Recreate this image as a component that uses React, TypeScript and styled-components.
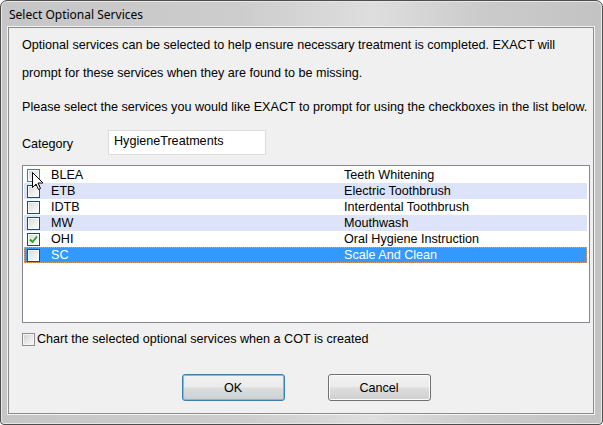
import styled, { createGlobalStyle } from 'styled-components'

const GlobalStyle = createGlobalStyle`
	html, body {
		margin: 0;
		padding: 0;
		background: #ffffff;
	}
	* {
		box-sizing: border-box;
	}
`

const Window = styled.div`
	position: relative;
	display: flex;
	flex-direction: column;
	width: 603px;
	height: 425px;
	padding: 0 8px 10px 7px;
	border: 1px solid #4d4d4d;
	border-radius: 7px 7px 4px 4px;
	background: linear-gradient(90deg, #c6c6c6 0%, #cdcdcd 40%, #dedede 62%, #cbcbcb 80%, #c3c3c3 100%);
	box-shadow: inset 0 0 0 1px #e8e8e8;
	font-family: 'Liberation Sans', Arial, sans-serif;
	font-size: 12.6px;
	color: #000;
`

const TitleBar = styled.div`
	display: flex;
	align-items: center;
	height: 26px;
	padding-left: 1px;
	font-family: 'Noto Sans', 'Liberation Sans', sans-serif;
	font-size: 12px;
	color: #000;
`

const Client = styled.div`
	flex: 1;
	display: flex;
	flex-direction: column;
	padding: 3px 3px 0 13px;
	border: 1px solid #8c8c8c;
	background: #f0f0f0;
	box-shadow: 0 0 0 1px #f4f4f4;
`

const Para = styled.p<{ $gap?: number }>`
	margin: 0 0 ${p => p.$gap ?? 0}px;
	line-height: 28px;
	white-space: nowrap;
`

const CategoryRow = styled.div`
	display: flex;
	align-items: center;
	margin-top: 9px;
	height: 25px;
`

const Label = styled.span`
	width: 86px;
	padding-top: 2px;
`

const TextBox = styled.div`
	width: 158px;
	height: 25px;
	padding: 3px 0 0 5px;
	border: 1px solid #dcdcdc;
	background: #fff;
`

const ListBox = styled.div`
	position: relative;
	margin-top: 10px;
	height: 158px;
	padding: 1px;
	border: 1px solid #828790;
	background: #fff;
`

const Row = styled.div<{ $alt?: boolean; $selected?: boolean }>`
	display: grid;
	grid-template-columns: 27px 293px 1fr;
	align-items: center;
	height: 16px;
	margin-right: 1px;
	background: ${p => (p.$selected ? '#3399ff' : p.$alt ? '#dde4f9' : '#fff')};
	color: ${p => (p.$selected ? '#fff' : '#000')};
	outline: ${p => (p.$selected ? '1px dotted #d8a070' : 'none')};
	outline-offset: -1px;
	line-height: 16px;
`

const Check = styled.span<{ $hover?: boolean }>`
	position: relative;
	display: block;
	width: 13px;
	height: 13px;
	margin-left: 3px;
	border: 1px solid ${p => (p.$hover ? '#3c7fb1' : '#1f4a6e')};
	background: linear-gradient(135deg, #d8d8d8 0%, #f4f4f4 70%, #ffffff 100%);
	box-shadow: inset 0 0 0 1px #fff;
`

const CheckMark = styled.svg`
	position: absolute;
	left: 1px;
	top: 1px;
`

const OptionRow = styled.label`
	display: flex;
	align-items: center;
	gap: 2px;
	margin-top: 8px;
	height: 16px;
`

const PlainCheck = styled.span`
	display: block;
	width: 13px;
	height: 13px;
	border: 1px solid #8f8f8f;
	background: linear-gradient(135deg, #cfcfcf 0%, #ececec 60%, #f8f8f8 100%);
	box-shadow: inset 0 0 0 1px #f4f4f4;
`

const Buttons = styled.div`
	display: flex;
	justify-content: center;
	gap: 43px;
	margin-top: 27px;
`

const Button = styled.button<{ $default?: boolean }>`
	width: 103px;
	height: 27px;
	border: 1px solid ${p => (p.$default ? '#3c7fb1' : '#707070')};
	border-radius: 3px;
	background: linear-gradient(180deg, #f2f2f2 0%, #ebebeb 48%, #dddddd 52%, #cfcfcf 100%);
	box-shadow: inset 0 0 0 1px ${p => (p.$default ? '#48d1fc' : '#fcfcfc')};
	font-family: 'Liberation Sans', Arial, sans-serif;
	font-size: 12.6px;
	color: #000;
	padding: 0;
`

const Cursor = styled.svg`
	position: absolute;
	left: 9px;
	top: 6px;
`

const services = [
	{ code: 'BLEA', name: 'Teeth Whitening' },
	{ code: 'ETB', name: 'Electric Toothbrush' },
	{ code: 'IDTB', name: 'Interdental Toothbrush' },
	{ code: 'MW', name: 'Mouthwash' },
	{ code: 'OHI', name: 'Oral Hygiene Instruction', checked: true },
	{ code: 'SC', name: 'Scale And Clean', selected: true },
]

export default () => {
	return (
		<>
			<GlobalStyle />
			<Window>
				<TitleBar>Select Optional Services</TitleBar>
				<Client>
					<Para $gap={6}>
						Optional services can be selected to help ensure necessary treatment is completed. EXACT will
						<br />
						prompt for these services when they are found to be missing.
					</Para>
					<Para>
						Please select the services you would like EXACT to prompt for using the checkboxes in the list below.
					</Para>
					<CategoryRow>
						<Label>Category</Label>
						<TextBox>HygieneTreatments</TextBox>
					</CategoryRow>
					<ListBox>
						{services.map((s, i) => (
							<Row key={s.code} $alt={i % 2 === 1} $selected={s.selected}>
								<Check $hover={i === 0}>
									{s.checked && (
										<CheckMark width='9' height='9' viewBox='0 0 9 9'>
											<path d='M1 4.5 L3.5 7 L8 1.5' fill='none' stroke='#21a121' strokeWidth='1.8' />
										</CheckMark>
									)}
								</Check>
								<span>{s.code}</span>
								<span>{s.name}</span>
							</Row>
						))}
						<Cursor width='12' height='19' viewBox='0 0 12 19'>
							<path
								d='M0.5 0.5 L0.5 15.5 L4 12 L6.5 17.5 L8.5 16.5 L6 11 L11 11 Z'
								fill='#fff'
								stroke='#000'
								strokeWidth='1'
								strokeLinejoin='round'
							/>
						</Cursor>
					</ListBox>
					<OptionRow>
						<PlainCheck />
						<span>Chart the selected optional services when a COT is created</span>
					</OptionRow>
					<Buttons>
						<Button $default>OK</Button>
						<Button>Cancel</Button>
					</Buttons>
				</Client>
			</Window>
		</>
	)
}
